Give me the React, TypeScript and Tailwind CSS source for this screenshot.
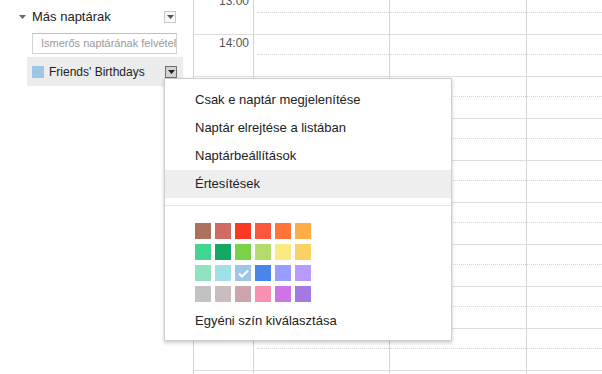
import React from "react";

const COLORS: string[][] = [
  ["#ac725e", "#d06b64", "#f83a22", "#fa573c", "#ff7537", "#ffad46"],
  ["#42d692", "#16a765", "#7bd148", "#b3dc6c", "#fbe983", "#fad165"],
  ["#92e1c0", "#9fe1e7", "#9fc6e7", "#4986e7", "#9a9cff", "#b99aff"],
  ["#c2c2c2", "#cabdbf", "#cca6ac", "#f691b2", "#cd74e6", "#a47ae2"],
];

const HOURS = ["13:00", "14:00", "", "", "", "", "", "", "", ""];

function DropBtn({ active }: { active?: boolean }) {
  return (
    <div
      className={
        "w-[12px] h-[12px] border flex items-center justify-center " +
        (active ? "border-[#6f6f6f] bg-[#d4d4d4]" : "border-[#c8c8c8] bg-[#f8f8f8]")
      }
    >
      <svg width="7" height="4" viewBox="0 0 7 4">
        <polygon points="0,0 7,0 3.5,4" fill={active ? "#222" : "#555"} />
      </svg>
    </div>
  );
}

export default function App() {
  return (
    <div
      className="relative w-[602px] h-[374px] overflow-hidden bg-white text-[#222]"
      style={{ fontFamily: '"Liberation Sans", Arial, sans-serif' }}
    >
      <div className="flex h-full">
        {/* Sidebar */}
        <div className="w-[193px] shrink-0 pt-[10px]">
          <div className="flex items-center h-[13px]">
            <div className="w-[19px]" />
            <svg width="7" height="4" viewBox="0 0 7 4" className="mr-[6px]">
              <polygon points="0,0 7,0 3.5,4" fill="#666" />
            </svg>
            <div className="text-[13px] leading-[13px] w-[132px]">Más naptárak</div>
            <DropBtn />
          </div>
          <div className="ml-[32px] mt-[10px] w-[145px] h-[21px] border border-[#d4d4d4] border-t-[#c0c0c0] flex items-center overflow-hidden pl-[8px]">
            <span className="text-[11px] text-[#999] whitespace-nowrap">Ismerős naptárának felvétele</span>
          </div>
          <div className="ml-[27px] mt-[3px] w-[156px] h-[29px] bg-[#ececec] flex items-center">
            <div className="ml-[5px] w-[12px] h-[12px] bg-[#9fc6e7]" />
            <div className="ml-[5px] text-[12px] w-[116px] whitespace-nowrap">Friends' Birthdays</div>
            <DropBtn active />
          </div>
        </div>

        {/* Calendar grid */}
        <div className="flex-1 overflow-hidden">
          <div className="-mt-[8px]">
            {HOURS.map((h, i) => (
              <div key={i} className="flex h-[42px]">
                <div className="w-[60px] shrink-0 border-l border-l-[#d4d4d4] border-t border-t-[#dddddd] text-right pr-[4px] pt-[1px] text-[12px] leading-[14px] text-[#555]">
                  {h}
                </div>
                <div className="flex-1 grid grid-cols-[136px_137px_1fr]">
                  {[0, 1, 2].map((c) => (
                    <div key={c} className="border-l border-l-[#d4d4d4] border-t border-t-[#dddddd]">
                      <div className={"h-[20px] border-b border-dotted border-b-[#d6d6d6] " + (c === 0 ? "ml-[3px]" : "")} />
                    </div>
                  ))}
                </div>
              </div>
            ))}
          </div>
        </div>
      </div>

      {/* Dropdown menu */}
      <div className="absolute left-[164px] top-[78px] w-[288px] h-[263px] bg-white border border-[#cccccc] shadow-[0_2px_4px_rgba(0,0,0,0.2)] pt-[7px] text-[13px] text-[#222]">
        <div className="h-[28px] leading-[28px] pl-[30px]">Csak e naptár megjelenítése</div>
        <div className="h-[28px] leading-[28px] pl-[30px]">Naptár elrejtése a listában</div>
        <div className="h-[28px] leading-[28px] pl-[30px]">Naptárbeállítások</div>
        <div className="h-[28px] leading-[28px] pl-[30px] bg-[#eeeeee]">Értesítések</div>
        <div className="mt-[7px] h-px bg-[#e5e5e5]" />
        <div className="mt-[17px] ml-[30px] grid grid-cols-[repeat(6,16px)] gap-x-[4px] gap-y-[5px] w-max">
          {COLORS.flat().map((col, i) => (
            <div key={i} className="w-[16px] h-[16px] flex items-center justify-center" style={{ backgroundColor: col }}>
              {col === "#9fc6e7" && (
                <svg width="11" height="9" viewBox="0 0 11 9">
                  <path d="M1 4.5 L4 7.5 L10 1.5" stroke="#fff" strokeWidth="2" fill="none" />
                </svg>
              )}
            </div>
          ))}
        </div>
        <div className="mt-[5px] h-[28px] leading-[28px] pl-[30px]">Egyéni szín kiválasztása</div>
      </div>
    </div>
  );
}
